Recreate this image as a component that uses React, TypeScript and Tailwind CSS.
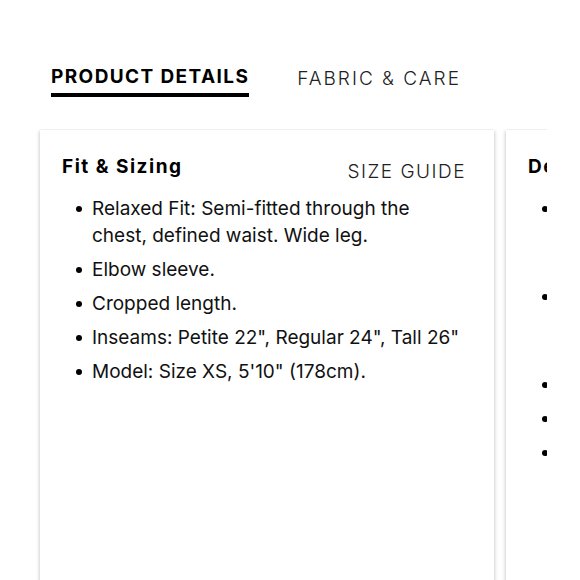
const fitItems = [
  "Relaxed Fit: Semi-fitted through the chest, defined waist. Wide leg.",
  "Elbow sleeve.",
  "Cropped length.",
  "Inseams: Petite 22\", Regular 24\", Tall 26\"",
  "Model: Size XS, 5'10\" (178cm).",
];

const detailItems = [
  "Lightweight crepe fabric with a soft, fluid drape that moves easily and feels cool against the skin.",
  "Notched collar with a front button closure, shoulder pleats and two patch pockets at the chest.",
  "Self-tie belt.",
  "Unlined.",
  "Imported.",
];

function BulletList({ items }: { items: string[] }) {
  return (
    <ul className="mt-[9px] flex flex-col gap-[7px] pl-[30px]">
      {items.map((item) => (
        <li key={item} className="relative text-[19px] leading-[27px] text-[#111]">
          <span className="absolute left-[-16px] top-[11px] h-[6px] w-[6px] rounded-full bg-black" />
          {item}
        </li>
      ))}
    </ul>
  );
}

function Card({ title, link, items }: { title: string; link?: string; items: string[] }) {
  return (
    <div className="h-[460px] w-[454px] shrink-0 bg-white pl-[22px] pr-[28px] pt-[23px] shadow-[0_1px_4px_rgba(0,0,0,0.28)]">
      <div className="flex h-[33px] items-start justify-between">
        <h3 className="text-[19px] font-bold tracking-[1.5px] text-black">{title}</h3>
        {link && <a className="mt-[5px] text-[19px] font-light tracking-[1.5px] text-[#222]">{link}</a>}
      </div>
      <BulletList items={items} />
    </div>
  );
}

export default function App() {
  return (
    <div className="h-[580px] w-[580px] overflow-hidden bg-white font-['Inter',sans-serif]">
      <nav className="flex gap-[48px] pl-[51px] pt-[64px]">
        <button className="border-b-[4px] border-black pb-[3px] text-[19px] font-bold leading-[26px] tracking-[1.4px] text-black">
          PRODUCT DETAILS
        </button>
        <button className="pb-[3px] text-[19px] font-light leading-[26px] tracking-[2px] text-[#222]">
          FABRIC &amp; CARE
        </button>
      </nav>
      <div className="mt-[32px] w-[547px] overflow-hidden">
        <div className="flex gap-[12px] pl-[40px] pt-[1px]">
          <Card title="Fit & Sizing" link="SIZE GUIDE" items={fitItems} />
          <Card title="Details" items={detailItems} />
        </div>
      </div>
    </div>
  );
}
